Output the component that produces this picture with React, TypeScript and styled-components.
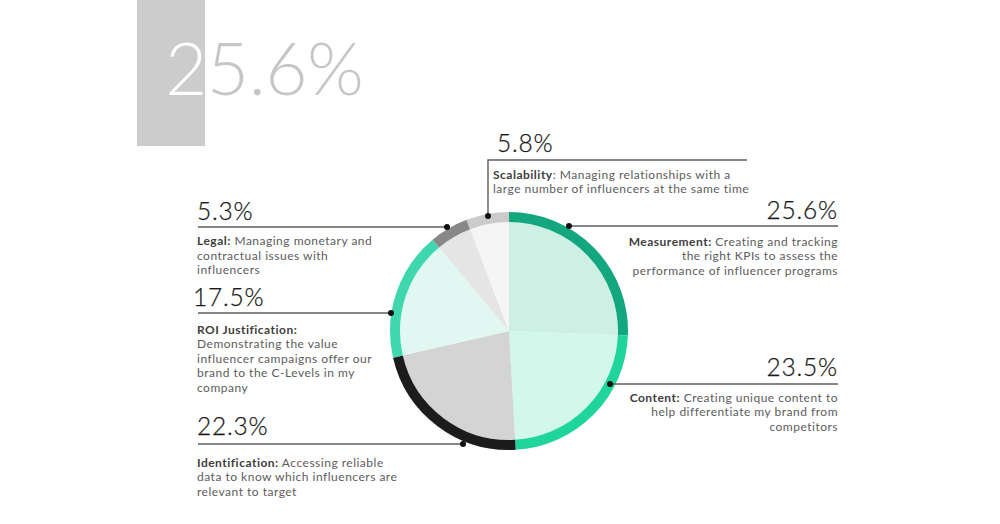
import React from "react";
import styled, { createGlobalStyle } from "styled-components";

const GlobalStyle = createGlobalStyle`
  html, body {
    margin: 0;
    padding: 0;
    background: #ffffff;
  }
  body {
    font-family: "Lato", "Liberation Sans", sans-serif;
  }
`;

const Page = styled.div`
  position: relative;
  width: 1000px;
  height: 524px;
  overflow: hidden;
  background: #ffffff;
`;

const Header = styled.header`
  display: grid;
  margin-left: 137px;
  width: 260px;
  height: 146px;
`;

const Tab = styled.div`
  grid-area: 1 / 1;
  width: 68px;
  height: 146px;
  background: #cccccc;
`;

const BigNumber = styled.h1`
  grid-area: 1 / 1;
  margin: 0;
  padding: 30px 0 0 28px;
  font-family: "Lato", "Liberation Sans", sans-serif;
  font-weight: 300;
  font-size: 73px;
  line-height: 74px;
  letter-spacing: -0.5px;
  background: linear-gradient(to right, #ffffff 68px, #c6c6c6 68px);
  -webkit-background-clip: text;
  background-clip: text;
  color: transparent;
`;

const Stage = styled.section`
  position: absolute;
  inset: 0;
`;

const ChartSvg = styled.svg`
  display: block;
  width: 1000px;
  height: 524px;
`;

const Callout = styled.div<{ $left?: number; $right?: number; $top: number; $align: "left" | "right" }>`
  position: absolute;
  top: ${({ $top }) => $top}px;
  ${({ $left }) => ($left !== undefined ? `left: ${$left}px;` : "")}
  ${({ $right }) => ($right !== undefined ? `right: ${$right}px;` : "")}
  display: flex;
  flex-direction: column;
  align-items: ${({ $align }) => ($align === "left" ? "flex-start" : "flex-end")};
  text-align: ${({ $align }) => $align};
`;

const Percent = styled.div<{ $shift?: number }>`
  font-family: "Lato", "Liberation Sans", sans-serif;
  font-weight: 300;
  font-size: 24.5px;
  line-height: 24px;
  letter-spacing: 0.8px;
  color: #1a1a1a;
  -webkit-text-stroke: 0.25px #1a1a1a;
  margin-left: ${({ $shift }) => $shift ?? 0}px;
  white-space: nowrap;
`;

const Desc = styled.p<{ $gap: number }>`
  margin: ${({ $gap }) => $gap}px 0 0;
  font-family: "Lato", "Liberation Sans", sans-serif;
  font-size: 12px;
  line-height: 14.5px;
  letter-spacing: 0.5px;
  color: #5c5c5c;
  white-space: nowrap;

  b {
    font-weight: 700;
    color: #3e3e3e;
  }
`;

type Slice = { pct: number; ring: string; fill: string };

const slices: Slice[] = [
  { pct: 25.6, ring: "#13a67f", fill: "#cdefe4" },
  { pct: 23.5, ring: "#1fd59b", fill: "#d2f7eb" },
  { pct: 22.3, ring: "#1c1c1c", fill: "#d4d4d4" },
  { pct: 17.5, ring: "#3fd7ad", fill: "#e0f8f1" },
  { pct: 5.3, ring: "#888888", fill: "#e5e5e5" },
  { pct: 5.8, ring: "#cbcbcb", fill: "#f5f5f5" },
];

const CX = 509;
const CY = 331;
const R_OUT = 119;
const RING = 10;

function pt(r: number, deg: number) {
  const a = (deg * Math.PI) / 180;
  return [CX + r * Math.sin(a), CY - r * Math.cos(a)];
}

function wedge(r: number, a0: number, a1: number) {
  const [x0, y0] = pt(r, a0);
  const [x1, y1] = pt(r, a1);
  const large = a1 - a0 > 180 ? 1 : 0;
  return `M${CX} ${CY} L${x0} ${y0} A${r} ${r} 0 ${large} 1 ${x1} ${y1} Z`;
}

function arc(r: number, a0: number, a1: number) {
  const [x0, y0] = pt(r, a0);
  const [x1, y1] = pt(r, a1);
  const large = a1 - a0 > 180 ? 1 : 0;
  return `M${x0} ${y0} A${r} ${r} 0 ${large} 1 ${x1} ${y1}`;
}

// leader lines: polyline points + dot on the ring
const leaders: { points: string; dot: [number, number] }[] = [
  { points: "747,160 488,160 488,216", dot: [488, 216] },
  { points: "838,226 569,226", dot: [569, 226] },
  { points: "838,384 610,384", dot: [610, 384] },
  { points: "198,227 447,227", dot: [447, 227] },
  { points: "198,313 391,313", dot: [391, 313] },
  { points: "198,444 463,444", dot: [463, 444] },
];

function PieChart() {
  let start = 0;
  const parts = slices.map((s) => {
    const a0 = start;
    const a1 = start + (s.pct / 100) * 360;
    start = a1;
    return { ...s, a0, a1 };
  });

  return (
    <ChartSvg viewBox="0 0 1000 524">
      {parts.map((p, i) => (
        <path key={`w${i}`} d={wedge(R_OUT - RING + 0.5, p.a0, p.a1)} fill={p.fill} />
      ))}
      {parts.map((p, i) => (
        <path
          key={`r${i}`}
          d={arc(R_OUT - RING / 2, p.a0, p.a1)}
          fill="none"
          stroke={p.ring}
          strokeWidth={RING}
        />
      ))}
      {leaders.map((l, i) => (
        <g key={`l${i}`}>
          <polyline points={l.points} fill="none" stroke="#5e5e5e" strokeWidth={1.4} />
          <circle cx={l.dot[0]} cy={l.dot[1]} r={3} fill="#111111" />
        </g>
      ))}
    </ChartSvg>
  );
}

export default function App() {
  return (
    <>
      <GlobalStyle />
      <Page>
        <Header>
          <Tab />
          <BigNumber>25.6%</BigNumber>
        </Header>

        <Stage>
          <PieChart />

          <Callout $left={493} $top={131} $align="left">
            <Percent $shift={4}>5.8%</Percent>
            <Desc $gap={12.5}>
              <b>Scalability</b>: Managing relationships with a
              <br />
              large number of influencers at the same time
            </Desc>
          </Callout>

          <Callout $right={162} $top={198} $align="right">
            <Percent>25.6%</Percent>
            <Desc $gap={12.5}>
              <b>Measurement:</b> Creating and tracking
              <br />
              the right KPIs to assess the
              <br />
              performance of influencer programs
            </Desc>
          </Callout>

          <Callout $right={162} $top={355} $align="right">
            <Percent>23.5%</Percent>
            <Desc $gap={11.5}>
              <b>Content:</b> Creating unique content to
              <br />
              help differentiate my brand from
              <br />
              competitors
            </Desc>
          </Callout>

          <Callout $left={197} $top={199} $align="left">
            <Percent>5.3%</Percent>
            <Desc $gap={11}>
              <b>Legal:</b> Managing monetary and
              <br />
              contractual issues with
              <br />
              influencers
            </Desc>
          </Callout>

          <Callout $left={197} $top={285} $align="left">
            <Percent $shift={-4}>17.5%</Percent>
            <Desc $gap={13.5}>
              <b>ROI Justification:</b>
              <br />
              Demonstrating the value
              <br />
              influencer campaigns offer our
              <br />
              brand to the C-Levels in my
              <br />
              company
            </Desc>
          </Callout>

          <Callout $left={197} $top={414} $align="left">
            <Percent>22.3%</Percent>
            <Desc $gap={17.5}>
              <b>Identification:</b> Accessing reliable
              <br />
              data to know which influencers are
              <br />
              relevant to target
            </Desc>
          </Callout>
        </Stage>
      </Page>
    </>
  );
}
